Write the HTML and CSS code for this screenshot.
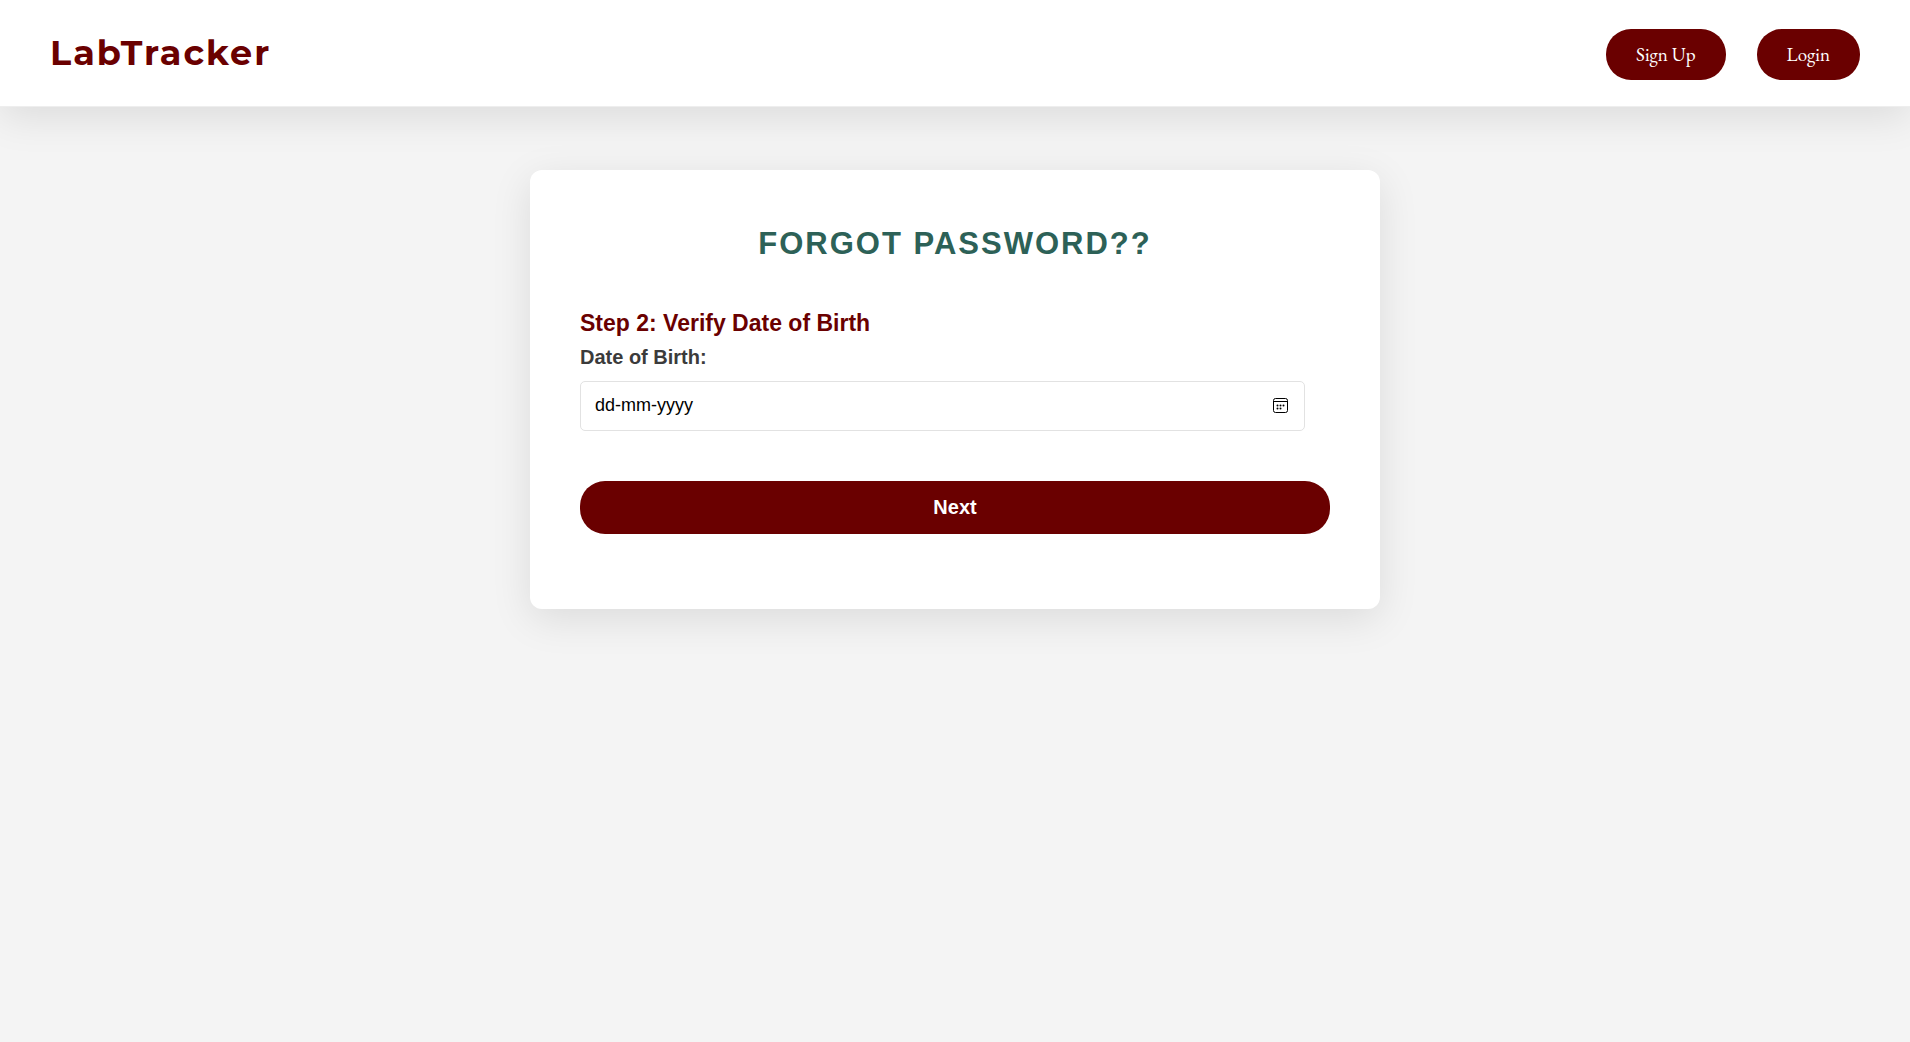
FILE: index.html
```html
<!DOCTYPE html>
<html lang="en">
<head>
  <meta charset="utf-8">
  <meta name="viewport" content="width=device-width, initial-scale=1">
  <title>LabTracker</title>
  <link rel="stylesheet" href="styles.css">
</head>
<body>
  <header class="site-header">
    <a class="logo" href="#">LabTracker</a>
    <nav class="site-nav">
      <a class="nav-link" href="#">Sign Up</a>
      <a class="nav-link" href="#">Login</a>
    </nav>
  </header>
  <main class="page">
    <form class="card">
      <h1 class="card-title">FORGOT PASSWORD??</h1>
      <h2 class="step-title">Step 2: Verify Date of Birth</h2>
      <label class="field-label" for="dob">Date of Birth:</label>
      <div class="date-field">
        <input class="date-input" id="dob" name="dob" type="text" inputmode="numeric" placeholder="dd-mm-yyyy">
        <button class="date-picker" type="button" aria-label="Show date picker">
          <svg width="15" height="15" viewBox="0 0 15 15" aria-hidden="true">
            <rect x="0.5" y="0.5" width="14" height="14" rx="2" fill="none" stroke="#000"/>
            <path d="M1 3.5H14" stroke="#000"/>
            <g fill="#000">
              <circle cx="4.5" cy="7.5" r="1"/>
              <circle cx="7.5" cy="7.5" r="1"/>
              <circle cx="10.5" cy="7.5" r="1"/>
              <circle cx="4.5" cy="10.5" r="1"/>
              <circle cx="7.5" cy="10.5" r="1"/>
            </g>
          </svg>
        </button>
      </div>
      <button class="submit" type="submit">Next</button>
    </form>
  </main>
</body>
</html>
```
FILE: styles.css
```css
* {
  box-sizing: border-box;
}

body {
  margin: 0;
  min-height: 100vh;
  background: #f4f4f4;
  font-family: "Liberation Sans", Arial, sans-serif;
}

.site-header {
  display: flex;
  align-items: flex-start;
  justify-content: space-between;
  padding: 29px 50px 26px;
  background: #fff;
  border-bottom: 1px solid #eee;
  box-shadow: 0 10px 40px rgba(0, 0, 0, 0.1);
}

.logo {
  color: #6a0000;
  font-family: Montserrat, Lato, sans-serif;
  font-size: 35px;
  font-weight: 700;
  line-height: 48px;
  letter-spacing: 2px;
  text-decoration: none;
}

.site-nav {
  display: flex;
  gap: 31px;
}

.nav-link {
  padding: 14px 30px;
  border-radius: 25px;
  background: #6a0000;
  color: #fff;
  font-family: "EB Garamond", "Liberation Serif", serif;
  font-size: 19px;
  line-height: 23px;
  text-decoration: none;
}

.page {
  padding: 63px 20px;
}

.card {
  max-width: 850px;
  margin: 0 auto;
  padding: 50px 50px 75px;
  border-radius: 12px;
  background: #fff;
  box-shadow: 0 10px 40px rgba(0, 0, 0, 0.1);
}

.card-title {
  margin: 0 0 39px;
  color: #2d6157;
  font-size: 31px;
  line-height: 48px;
  letter-spacing: 2px;
  text-align: center;
}

.step-title {
  margin: 0 0 4px;
  color: #6a0000;
  font-size: 23px;
  line-height: 32px;
}

.field-label {
  display: block;
  margin-bottom: 10px;
  color: #3b3b3b;
  font-size: 20px;
  font-weight: bold;
  line-height: 28px;
}

.date-field {
  display: flex;
  align-items: center;
  width: calc(100% - 25px);
  height: 50px;
  margin-bottom: 50px;
  padding: 0 14px 2px;
  border: 1px solid #e2e2e2;
  border-radius: 5px;
}

.date-input {
  flex: 1;
  min-width: 0;
  padding: 0;
  border: 0;
  background: none;
  color: #000;
  font: 18px/24px "Liberation Sans", Arial, sans-serif;
}

.date-input::placeholder {
  color: #000;
  opacity: 1;
}

.date-picker {
  display: flex;
  padding: 2px;
  border: 0;
  background: none;
}

.submit {
  display: block;
  width: 100%;
  padding: 14px;
  border: 0;
  border-radius: 25px;
  background: #6a0000;
  color: #fff;
  font: bold 20px/25px "Liberation Sans", Arial, sans-serif;
}
```
